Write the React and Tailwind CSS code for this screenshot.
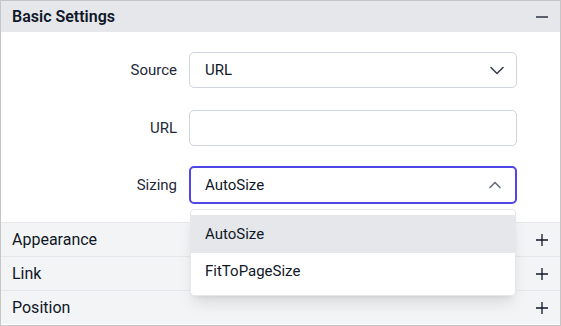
import React from 'react';

const font = { fontFamily: 'Roboto, "Noto Sans", sans-serif' };

function ChevronDown({ className }) {
  return (
    <svg width="16" height="16" viewBox="0 0 16 16" fill="none" className={className}>
      <path d="M2 5.5L8 11.5l6-6" stroke="currentColor" strokeWidth="1.6" strokeLinecap="round" strokeLinejoin="round" />
    </svg>
  );
}

function ChevronUp({ className }) {
  return (
    <svg width="14" height="14" viewBox="0 0 14 14" fill="none" className={className}>
      <path d="M2 9.5L7 4.5l5 5" stroke="currentColor" strokeWidth="1.7" strokeLinecap="round" strokeLinejoin="round" />
    </svg>
  );
}

function Plus() {
  return (
    <svg width="14" height="14" viewBox="0 0 14 14" fill="none" className="text-gray-900">
      <path d="M7 1v12M1 7h12" stroke="currentColor" strokeWidth="1.3" />
    </svg>
  );
}

function Minus() {
  return (
    <svg width="14" height="14" viewBox="0 0 14 14" fill="none" className="text-gray-900">
      <path d="M1 7h12" stroke="currentColor" strokeWidth="1.3" />
    </svg>
  );
}

function Row({ label, className, children }) {
  return (
    <div className={`flex items-center ${className}`}>
      <div className="w-[176px] text-right text-[15px] text-gray-800">{label}</div>
      <div className="ml-[12px] w-[328px]">{children}</div>
    </div>
  );
}

function Section({ title }) {
  return (
    <div className="flex h-[34px] items-center justify-between border-t border-gray-200 bg-gray-100 pl-[11px] pr-[11px]">
      <span className="text-[16px] text-gray-900">{title}</span>
      <Plus />
    </div>
  );
}

export default function App() {
  return (
    <div style={font} className="h-[326px] w-[561px] bg-white">
      <div className="relative h-full border border-[#c6c6c6]">
        <div className="flex h-[31px] items-center justify-between bg-gray-200 pl-[11px] pr-[11px]">
          <span className="text-[16px] font-semibold text-gray-900">Basic Settings</span>
          <Minus />
        </div>

        <div className="flex flex-col pb-[18px] pt-[20px]">
          <Row label="Source">
            <div className="flex h-[36px] items-center justify-between rounded-[5px] border border-gray-300 pl-[15px] pr-[11px] text-[15px] text-gray-900">
              <span>URL</span>
              <ChevronDown className="text-gray-700" />
            </div>
          </Row>
          <Row label="URL" className="mt-[22px]">
            <div className="h-[36px] rounded-[5px] border border-gray-300" />
          </Row>
          <Row label="Sizing" className="mt-[20px]">
            <div className="flex h-[38px] items-center justify-between rounded-[5px] border-2 border-[#4f46e5] pl-[14px] pr-[13px] text-[15px] text-gray-900">
              <span>AutoSize</span>
              <ChevronUp className="text-gray-500" />
            </div>
          </Row>
        </div>

        <Section title="Appearance" />
        <Section title="Link" />
        <Section title="Position" />

        <div className="absolute left-[189px] top-[208px] w-[326px] overflow-hidden rounded-[4px] border border-gray-200 bg-white py-[5px] shadow-lg">
          <div className="flex h-[38px] items-center bg-gray-200 pl-[14px] text-[15px] text-gray-900">AutoSize</div>
          <div className="flex h-[37px] items-center pl-[14px] text-[15px] text-gray-900">FitToPageSize</div>
        </div>
      </div>
    </div>
  );
}
